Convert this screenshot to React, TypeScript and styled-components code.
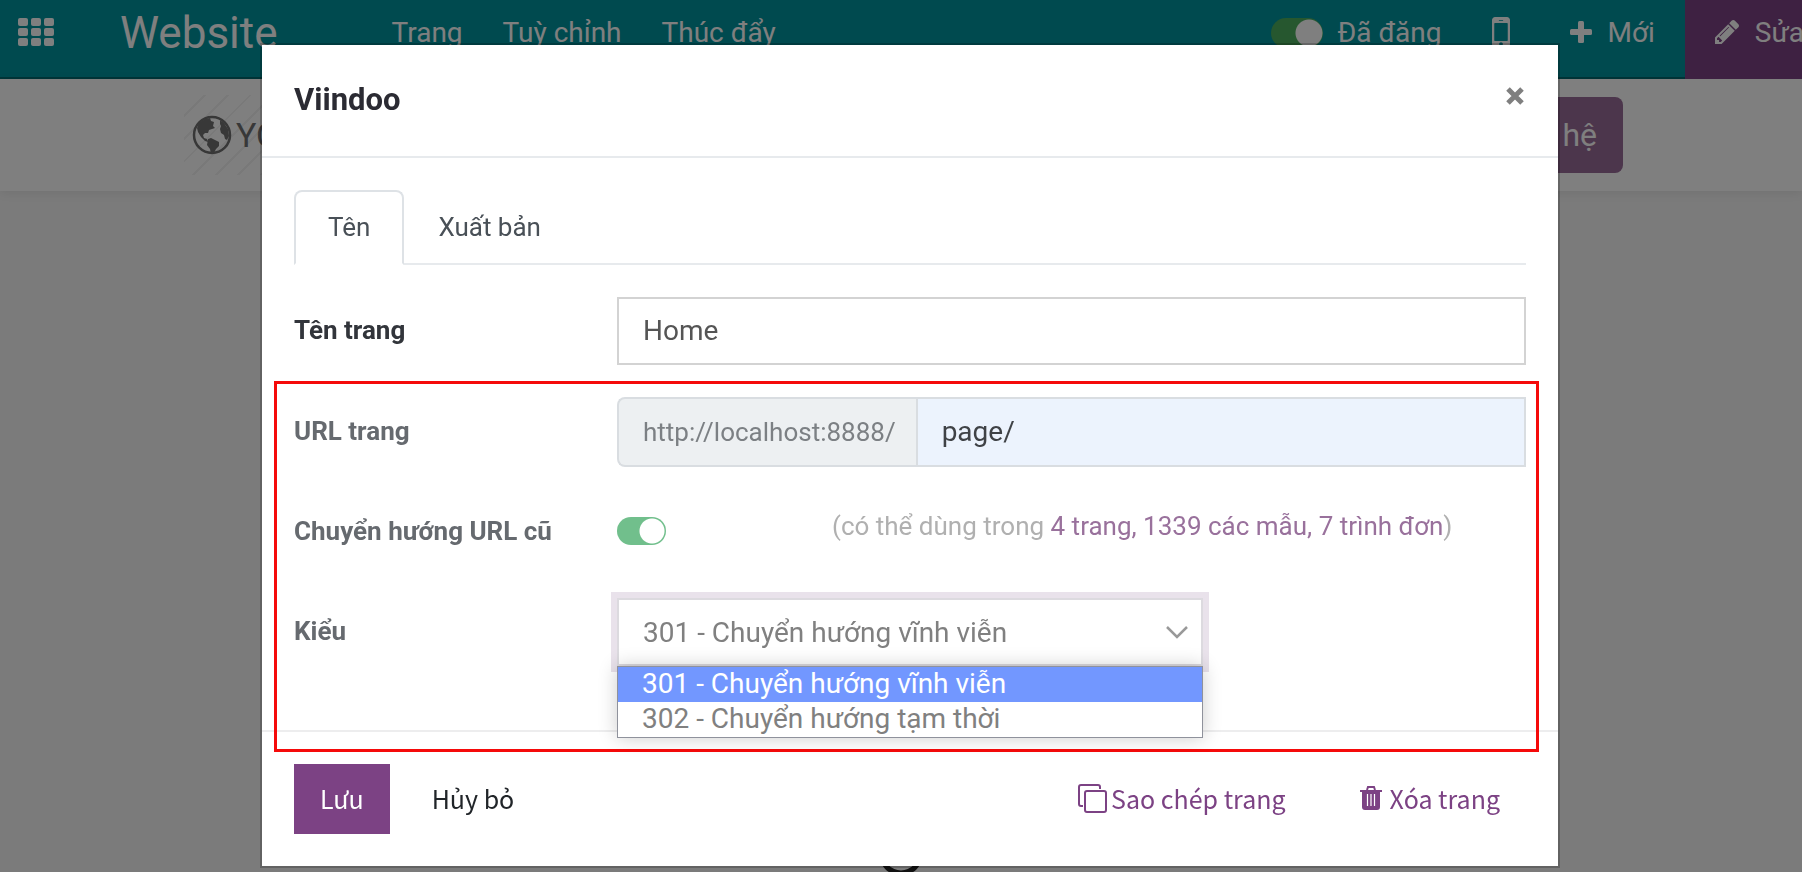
import React, { useState } from "react";
import styled, { createGlobalStyle, css } from "styled-components";

const Global = createGlobalStyle`
  *, *::before, *::after { box-sizing: border-box; }
  html, body { margin: 0; height: 100%; }
  body { background: #f6f6f6; color: #495057; font: 26px/39px Roboto, sans-serif; overflow: hidden; }
  button, input, select { font: inherit; color: inherit; margin: 0; }
  a { text-decoration: none; }
`;

const Page = styled.div`
  min-height: 100vh;
  overflow: hidden;
`;

const AppBar = styled.header`
  display: flex;
  align-items: stretch;
  height: 79px;
  background: #00949e;
  border-bottom: 2px solid #006a70;
  color: #fff;
  white-space: nowrap;
`;

const AppsButton = styled.button`
  width: 72px;
  height: 64px;
  padding: 0;
  border: 0;
  background: none;
  display: grid;
  place-items: center;
`;

const Brand = styled.a`
  margin-left: 48px;
  padding-right: 114px;
  font-size: 44px;
  line-height: 66px;
  color: #fff;
`;

const Menu = styled.nav`
  display: flex;
  gap: 40px;
  flex: 1;
`;

const barItem = css`
  font-size: 28px;
  line-height: 66px;
  color: #fff;
`;

const MenuLink = styled.a`
  ${barItem}
`;

const BarTools = styled.div`
  display: flex;
  margin-right: -30px;
`;

const PublishLabel = styled.label`
  ${barItem}
  display: flex;
  gap: 14px;
  align-items: center;
  height: 66px;
`;

const BarSwitch = styled.input`
  appearance: none;
  width: 52px;
  height: 30px;
  margin: 0;
  border-radius: 15px;
  background: radial-gradient(circle at 38px 15px, #fff 13px, transparent 14px), #4cae5e;
`;

const BarButton = styled.button<{ $primary?: boolean }>`
  ${barItem}
  display: flex;
  align-items: flex-start;
  gap: 16px;
  height: ${(p) => (p.$primary ? "79px" : "77px")};
  padding: 0 ${(p) => (p.$primary ? "28px" : "30px")} 0 ${(p) => (p.$primary ? "30px" : "0")};
  border: 0;
  background: ${(p) => (p.$primary ? "#7c4284" : "transparent")};
  svg { height: 64px; }
`;

const PhoneButton = styled.button`
  display: flex;
  align-items: center;
  justify-content: center;
  width: 118px;
  height: 64px;
  margin-right: 10px;
  padding: 0;
  border: 0;
  background: none;
  color: #fff;
`;

const SiteHeader = styled.div`
  display: flex;
  align-items: center;
  justify-content: space-between;
  height: 112px;
  padding: 0 179px 0 184px;
  background: #fff;
  box-shadow: 0 2px 10px rgba(0, 0, 0, 0.08);
`;

const Logo = styled.a`
  display: flex;
  align-items: center;
  gap: 4px;
  height: 80px;
  padding: 0 8px;
  font-size: 34px;
  color: #707070;
  background: repeating-linear-gradient(135deg, #fff 0 14px, #f3f3f3 14px 16px);
`;

const ContactButton = styled.button`
  height: 76px;
  padding: 0 26px;
  border: 0;
  border-radius: 8px;
  background: #986c98;
  color: #fff;
  font-size: 32px;
`;

const ScrollHint = styled.div`
  display: flex;
  justify-content: center;
  padding-top: 639px;
`;

const Backdrop = styled.div`
  position: fixed;
  inset: 0;
  padding: 45px 244px 6px 262px;
  background: rgba(0, 0, 0, 0.5);
`;

const Dialog = styled.div`
  background: #fff;
  box-shadow: 0 0 0 2px rgba(0, 0, 0, 0.2);
`;

const DialogHeader = styled.header`
  display: flex;
  justify-content: space-between;
  align-items: flex-start;
  height: 113px;
  padding: 32px;
  border-bottom: 2px solid #e7eaed;
`;

const Title = styled.h1`
  margin: 0;
  font-size: 31px;
  line-height: 46px;
  font-weight: 700;
  color: #2b2b33;
`;

const CloseButton = styled.button`
  display: grid;
  place-items: center;
  width: 22px;
  height: 38px;
  padding: 0;
  border: 0;
  background: none;
`;

const DialogBody = styled.div`
  padding: 32px 32px 0;
`;

const Tabs = styled.div`
  display: flex;
  margin-bottom: 32px;
  border-bottom: 2px solid #e7eaed;
`;

const Tab = styled.button<{ $active?: boolean }>`
  height: 75px;
  margin-bottom: -2px;
  padding: 0 32px;
  border: 2px solid ${(p) => (p.$active ? "#dee2e6" : "transparent")};
  border-bottom: ${(p) => (p.$active ? "2px solid #fff" : "2px solid transparent")};
  border-radius: 8px 8px 0 0;
  background: ${(p) => (p.$active ? "#fff" : "transparent")};
`;

const Row = styled.div<{ $height: number }>`
  display: grid;
  grid-template-columns: 323px 1fr;
  align-items: center;
  height: ${(p) => p.$height}px;
  margin-bottom: 32px;
`;

const Label = styled.label<{ $muted?: boolean }>`
  padding-bottom: 2px;
  font-weight: 700;
  color: ${(p) => (p.$muted ? "#666a6f" : "#32353b")};
`;

const TextInput = styled.input`
  width: 100%;
  height: 68px;
  padding: 0 24px 2px;
  border: 2px solid #d3d3d3;
  border-radius: 0;
  background: #fff;
  color: #555;
  font-size: 28px;
`;

const Highlight = styled.section`
  position: relative;
  z-index: 1;
  height: 371px;
  margin: -16px -13px 0 -20px;
  padding: 13px 10px 0 17px;
  border: 3px solid #f50a0a;
`;

const InputGroup = styled.div`
  display: flex;
  height: 70px;
`;

const Prefix = styled.span`
  padding: 0 20px 0 24px;
  line-height: 66px;
  border: 2px solid #d9dde1;
  border-right: 0;
  border-radius: 8px 0 0 8px;
  background: #edf0f2;
  color: #7c8084;
`;

const UrlInput = styled.input`
  flex: 1;
  min-width: 0;
  padding: 0 24px 2px;
  border: 2px solid #d9dde1;
  border-radius: 0;
  background: #ecf3fd;
  color: #3f4246;
  font-size: 28px;
`;

const SwitchCell = styled.div`
  display: flex;
  align-items: center;
  gap: 166px;
`;

const Switch = styled.input`
  appearance: none;
  flex: none;
  width: 49px;
  height: 28px;
  && { margin-bottom: 4px; }
  border-radius: 14px;
  background: radial-gradient(circle at 35px 14px, #fff 12px, transparent 13px), #71bf8c;
`;

const Usage = styled.span`
  margin-bottom: 12px;
  color: #b0b0b0;
  white-space: nowrap;
  a { color: #99719c; }
`;

const SelectBox = styled.div`
  position: relative;
  width: 586px;
  svg { position: absolute; right: 15px; top: 28px; pointer-events: none; }
`;

const Select = styled.select`
  appearance: none;
  display: block;
  width: 100%;
  height: 68px;
  padding: 0 24px;
  border: 2px solid #dcdadf;
  border-radius: 0;
  outline: 0;
  background: #fff;
  box-shadow: 0 0 0 6px #e9e2eb;
  color: #808080;
  font-size: 28px;
`;

const Options = styled.ul`
  position: absolute;
  z-index: 1;
  top: 100%;
  left: 0;
  right: 0;
  margin: 0;
  padding: 0;
  list-style: none;
  border: 1px solid #8f929c;
  background: #fff;
  box-shadow: 0 0 18px rgba(0, 0, 0, 0.2);
`;

const Option = styled.li<{ $selected?: boolean }>`
  padding: 0 24px 2px;
  font-size: 28px;
  line-height: 33px;
  color: ${(p) => (p.$selected ? "#fff" : "#808080")};
  background: ${(p) => (p.$selected ? "#7297ff" : "#fff")};
`;

const DialogFooter = styled.footer`
  display: flex;
  align-items: center;
  justify-content: space-between;
  height: 136px;
  margin-top: -22px;
  padding: 0 32px;
  border-top: 2px solid #ededee;
  font-family: "Noto Sans CJK SC", sans-serif;
  font-size: 25px;
`;

const ButtonGroup = styled.div<{ $gap: number }>`
  display: flex;
  gap: ${(p) => p.$gap}px;
`;

const FooterButton = styled.button<{ $kind: "primary" | "plain" | "link"; $iconGap?: number }>`
  display: flex;
  align-items: center;
  gap: ${(p) => p.$iconGap}px;
  height: 70px;
  padding: 0 26px 2px;
  border: 0;
  background: ${(p) => (p.$kind === "primary" ? "#7c4284" : "transparent")};
  color: ${(p) => ({ primary: "#fff", plain: "#212529", link: "#7c4284" })[p.$kind]};
`;

const GridIcon = () => (
  <svg width="36" height="28" viewBox="0 0 36 28" fill="#fff">
    {[0, 10, 20].map((y) => [0, 13, 26].map((x) => <rect key={`${x}-${y}`} x={x} y={y} width="10" height="8" rx="2" />))}
  </svg>
);

const PhoneIcon = () => (
  <svg width="18" height="30" viewBox="0 256 768 1280" fill="currentColor">
    <path d="M464 1408q0-33-23.5-56.5t-56.5-23.5-56.5 23.5-23.5 56.5 23.5 56.5 56.5 23.5 56.5-23.5 23.5-56.5zM672 1248v-704q0-13-9.5-22.5t-22.5-9.5h-512q-13 0-22.5 9.5t-9.5 22.5v704q0 13 9.5 22.5t22.5 9.5h512q13 0 22.5-9.5t9.5-22.5zM480 400q0-16-16-16h-160q-16 0-16 16t16 16h160q16 0 16-16zM768 384v1024q0 52-38 90t-90 38h-512q-52 0-90-38t-38-90v-1024q0-52 38-90t90-38h512q52 0 90 38t38 90z" />
  </svg>
);

const PlusIcon = () => (
  <svg width="22" height="22" viewBox="0 0 22 22" fill="currentColor">
    <rect x="8" y="0" width="6" height="22" rx="1.5" />
    <rect x="0" y="8" width="22" height="6" rx="1.5" />
  </svg>
);

const PencilIcon = () => (
  <svg width="24" height="24" viewBox="0 149 1515 1515" fill="currentColor">
    <path d="M363 1536l91-91-235-235-91 91v107h128v128h107zM886 608q0-22-22-22-10 0-17 7l-542 542q-7 7-7 17 0 22 22 22 10 0 17-7l542-542q7-7 7-17zM832 416l416 416-832 832h-416v-416zM1515 512q0 53-37 90l-166 166-416-416 166-165q36-38 90-38 53 0 91 38l235 234q37 39 37 91z" />
  </svg>
);

const CloseIcon = () => (
  <svg width="18" height="18" viewBox="0 0 18 18" fill="none" stroke="#7f7f7f" strokeWidth="5">
    <path d="M2 2l14 14M16 2L2 16" />
  </svg>
);

const GlobeIcon = () => (
  <svg width="40" height="40" viewBox="0 0 40 40">
    <circle cx="20" cy="20" r="18" fill="none" stroke="#707070" strokeWidth="2.5" />
    <path
      d="M7 8l6-4 5-1 1 3 3 1-1 4 2 2-3 1-3 1-1 3-3 0-2 2 1 3 3 1 1 3-3-1-4-4-3-5-1-4zM16 24l3-1 4 2 4 2 0 4-3 3-2 4-3 1-1-5-3-4zM28 5l4 3 4 6 1 7-2 4-2-1-1-4-3-2-1-4 1-3-1-2z"
      fill="#707070"
    />
  </svg>
);

const CopyIcon = () => (
  <svg width="29" height="29" viewBox="0 0 29 29" fill="none" stroke="#7c4284" strokeWidth="2">
    <rect x="7" y="7" width="21" height="21" rx="2" />
    <path d="M5 22H3a2 2 0 0 1-2-2V3a2 2 0 0 1 2-2h17a2 2 0 0 1 2 2v2" />
  </svg>
);

const TrashIcon = () => (
  <svg width="22" height="24" viewBox="0 0 22 24">
    <path d="M7 4l1-3h6l1 3" fill="none" stroke="#7c4284" strokeWidth="2" />
    <path d="M0 4h22v2h-2v15a3 3 0 0 1-3 3H5a3 3 0 0 1-3-3V6H0z" fill="#7c4284" />
    <path d="M7.5 8v12M11 8v12M14.5 8v12" stroke="#fff" strokeWidth="1.2" />
  </svg>
);

const options = ["301 - Chuyển hướng vĩnh viễn", "302 - Chuyển hướng tạm thời"];

export default function App() {
  const [kind, setKind] = useState(options[0]);
  return (
    <Page>
      <Global />
      <AppBar>
        <AppsButton aria-label="Apps"><GridIcon /></AppsButton>
        <Brand href="#">Website</Brand>
        <Menu>
          <MenuLink href="#">Trang</MenuLink>
          <MenuLink href="#">Tuỳ chỉnh</MenuLink>
          <MenuLink href="#">Thúc đẩy</MenuLink>
        </Menu>
        <BarTools>
          <PublishLabel><BarSwitch type="checkbox" defaultChecked />Đã đăng</PublishLabel>
          <PhoneButton aria-label="Mobile"><PhoneIcon /></PhoneButton>
          <BarButton><PlusIcon />Mới</BarButton>
          <BarButton $primary><PencilIcon />Sửa</BarButton>
        </BarTools>
      </AppBar>
      <SiteHeader>
        <Logo href="#"><GlobeIcon />YOUR LOGO</Logo>
        <ContactButton>Liên hệ</ContactButton>
      </SiteHeader>
      <ScrollHint>
        <svg width="46" height="46" viewBox="0 0 46 46" fill="none" stroke="#222" strokeWidth="5"><circle cx="23" cy="23" r="20" /></svg>
      </ScrollHint>
      <Backdrop>
        <Dialog role="dialog" aria-modal="true" aria-labelledby="dialog-title">
          <DialogHeader>
            <Title id="dialog-title">Viindoo</Title>
            <CloseButton aria-label="Close"><CloseIcon /></CloseButton>
          </DialogHeader>
          <DialogBody>
            <Tabs role="tablist">
              <Tab role="tab" aria-selected="true" $active>Tên</Tab>
              <Tab role="tab" aria-selected="false">Xuất bản</Tab>
            </Tabs>
            <Row $height={68}>
              <Label htmlFor="name">Tên trang</Label>
              <TextInput id="name" defaultValue="Home" />
            </Row>
            <Highlight>
              <Row $height={70}>
                <Label $muted htmlFor="url">URL trang</Label>
                <InputGroup><Prefix>http://localhost:8888/</Prefix><UrlInput id="url" defaultValue="page/" /></InputGroup>
              </Row>
              <Row $height={67}>
                <Label $muted htmlFor="redirect">Chuyển hướng URL cũ</Label>
                <SwitchCell>
                  <Switch id="redirect" type="checkbox" defaultChecked />
                  <Usage>(có thể dùng trong <a href="#">4 trang, 1339 các mẫu, 7 trình đơn</a>)</Usage>
                </SwitchCell>
              </Row>
              <Row $height={68}>
                <Label $muted htmlFor="kind">Kiểu</Label>
                <SelectBox>
                  <Select id="kind" value={kind} onChange={(e) => setKind(e.target.value)}>
                    {options.map((o) => <option key={o}>{o}</option>)}
                  </Select>
                  <svg width="22" height="13" viewBox="0 0 22 13" fill="none" stroke="#999" strokeWidth="2.5"><path d="M1 1l10 10L21 1" /></svg>
                  <Options>
                    {options.map((o) => <Option key={o} $selected={o === kind}>{o}</Option>)}
                  </Options>
                </SelectBox>
              </Row>
            </Highlight>
          </DialogBody>
          <DialogFooter>
            <ButtonGroup $gap={16}>
              <FooterButton $kind="primary">Lưu</FooterButton>
              <FooterButton $kind="plain">Hủy bỏ</FooterButton>
            </ButtonGroup>
            <ButtonGroup $gap={22}>
              <FooterButton $kind="link" $iconGap={4}><CopyIcon />Sao chép trang</FooterButton>
              <FooterButton $kind="link" $iconGap={8}><TrashIcon />Xóa trang</FooterButton>
            </ButtonGroup>
          </DialogFooter>
        </Dialog>
      </Backdrop>
    </Page>
  );
}
